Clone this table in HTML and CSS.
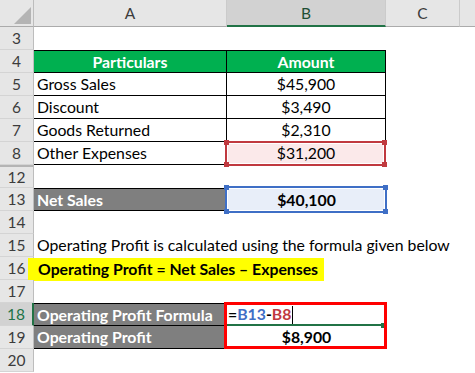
FILE: index.html
```html
<!DOCTYPE html>
<html>
<head>
<meta charset="utf-8">
<link rel="stylesheet" href="styles.css">
</head>
<body>
<div class="sheet">
  <div class="corner"><svg width="17" height="17" viewBox="0 0 17 17"><polygon points="17,0 17,17 0,17" fill="#b4b4b4"/></svg></div>
  <div class="ch">A</div>
  <div class="ch sel">B</div>
  <div class="ch">C</div>
  <div class="ch last"></div>

  <div class="rh">3</div>

  <div class="rh">4</div>
  <div class="c t top hd">Particulars</div>
  <div class="c t top hd">Amount</div>

  <div class="rh">5</div>
  <div class="c t">Gross Sales</div>
  <div class="c t ctr">$45,900</div>

  <div class="rh">6</div>
  <div class="c t">Discount</div>
  <div class="c t ctr">$3,490</div>

  <div class="rh">7</div>
  <div class="c t">Goods Returned</div>
  <div class="c t ctr">$2,310</div>

  <div class="rh">8</div>
  <div class="c t">Other Expenses</div>
  <div class="c t ctr ref red">$31,200<span class="box"><i class="h tl"></i><i class="h tr"></i><i class="h bl"></i><i class="h br"></i></span></div>

  <div class="rh gap">12</div>

  <div class="rh">13</div>
  <div class="c gr tb">Net Sales</div>
  <div class="c ctr b ref blue">$40,100<span class="box"><i class="h tl"></i><i class="h tr"></i><i class="h bl"></i><i class="h br"></i></span></div>

  <div class="rh">14</div>

  <div class="rh">15</div>
  <div class="c">Operating Profit is calculated using the formula given below</div>

  <div class="rh">16</div>
  <div class="c cell-hl"><span class="hl">Operating Profit = Net Sales – Expenses</span></div>

  <div class="rh">17</div>

  <div class="rh sel">18</div>
  <div class="c gr tb">Operating Profit Formula</div>
  <div class="c edit"><span class="f-k">=</span><span class="f-b">B13</span><span class="f-k">-</span><span class="f-r">B8</span><span class="caret"></span><span class="frame"></span><i class="fill"></i></div>

  <div class="rh">19</div>
  <div class="c gr bb">Operating Profit</div>
  <div class="c ctr b">$8,900</div>

  <div class="rh">20</div>
</div>
</body>
</html>
```
FILE: styles.css
```css
* { box-sizing: border-box; }
body {
  margin: 0;
  background: #fff;
  font-family: Lato, "Liberation Sans", sans-serif;
  font-size: 15.8px;
  color: #000;
}
.sheet {
  display: grid;
  grid-template-columns: 34px 193px 159px 74px 1fr;
  grid-template-rows: 27px;
  grid-auto-rows: 23px;
  width: 475px;
  height: 373px;
  overflow: hidden;
}
.corner {
  background: #e6e6e6;
  border-right: 1px solid #bdbdbd;
  border-bottom: 1px solid #ababab;
  display: flex;
  align-items: flex-end;
  justify-content: flex-end;
  padding: 0 2px 2px 0;
}
.corner svg { display: block; }
.ch {
  background: #e6e6e6;
  border-right: 1px solid #cbcbcb;
  border-bottom: 1px solid #ababab;
  display: flex;
  align-items: center;
  justify-content: center;
  color: #3c3c3c;
  font-size: 15.5px;
}
.ch.sel {
  background: #d2d2d2;
  border-bottom: 2px solid #217346;
  color: #1e4e34;
}
.ch.last { border-right: none; }
.rh {
  grid-column: 1;
  background: #e6e6e6;
  border-right: 1px solid #bdbdbd;
  border-bottom: 1px solid #d4d4d4;
  display: flex;
  align-items: center;
  justify-content: center;
  color: #3c3c3c;
  font-size: 15.5px;
}
.rh.gap { border-top: 2px solid #b4b4b4; }
.rh.sel {
  background: #d2d2d2;
  border-right: 2px solid #217346;
  color: #217346;
}
.c {
  padding: 0 3px;
  white-space: nowrap;
  line-height: 22px;
}
.t {
  border-right: 1px solid #000;
  border-bottom: 1px solid #000;
}
.t.top { border-top: 1px solid #000; line-height: 21px; }
.hd {
  background: #00b050;
  color: #fff;
  font-weight: 700;
  text-align: center;
}
.ctr { text-align: center; }
.b { font-weight: 700; }
.gr {
  background: #7f7f7f;
  color: #fff;
  font-weight: 700;
  border-right: 1px solid #000;
}
.gr.tb {
  border-top: 1px solid #000;
  border-bottom: 1px solid #000;
  line-height: 21px;
}
.gr.bb { border-bottom: 1px solid #000; }

.ref { position: relative; }
.ref.red { background: #fbe9ea; }
.ref.blue { background: #e8eef9; line-height: 23px; }
.box {
  position: absolute;
  top: -1px;
  left: -2px;
  right: -1px;
  bottom: -2px;
  border: 2px solid #c0393f;
  box-shadow: inset 0 0 0 1px #fff;
}
.blue .box {
  top: -2px;
  bottom: -2px;
  border-color: #3f6fc6;
}
.h {
  position: absolute;
  width: 5px;
  height: 5px;
  background: #c0393f;
}
.blue .h { background: #3f6fc6; }
.h.tl { top: -3px; left: -3px; }
.h.tr { top: -3px; right: -3px; }
.h.bl { bottom: -3px; left: -3px; }
.h.br { bottom: -3px; right: -3px; }

.cell-hl { padding: 0; }
.hl {
  display: block;
  width: 296px;
  height: 23px;
  margin: 1px 0 0 -6px;
  padding-left: 10px;
  background: #ffff00;
  font-weight: 700;
  line-height: 22px;
}

.edit {
  position: relative;
  font-weight: 700;
  padding-left: 1px;
  border-bottom: 2px solid #217346;
}
.f-k { color: #000; }
.f-b { color: #3f6fc6; }
.f-r { color: #c0393f; }
.caret {
  display: inline-block;
  width: 1px;
  height: 18px;
  background: #000;
  vertical-align: -4px;
  margin-left: 1px;
}
.frame {
  position: absolute;
  top: -1px;
  left: -3px;
  width: 163px;
  height: 47px;
  border: 3px solid #ff0000;
  z-index: 2;
}
.fill {
  position: absolute;
  right: 1px;
  bottom: -4px;
  width: 4px;
  height: 5px;
  background: #217346;
}
```
